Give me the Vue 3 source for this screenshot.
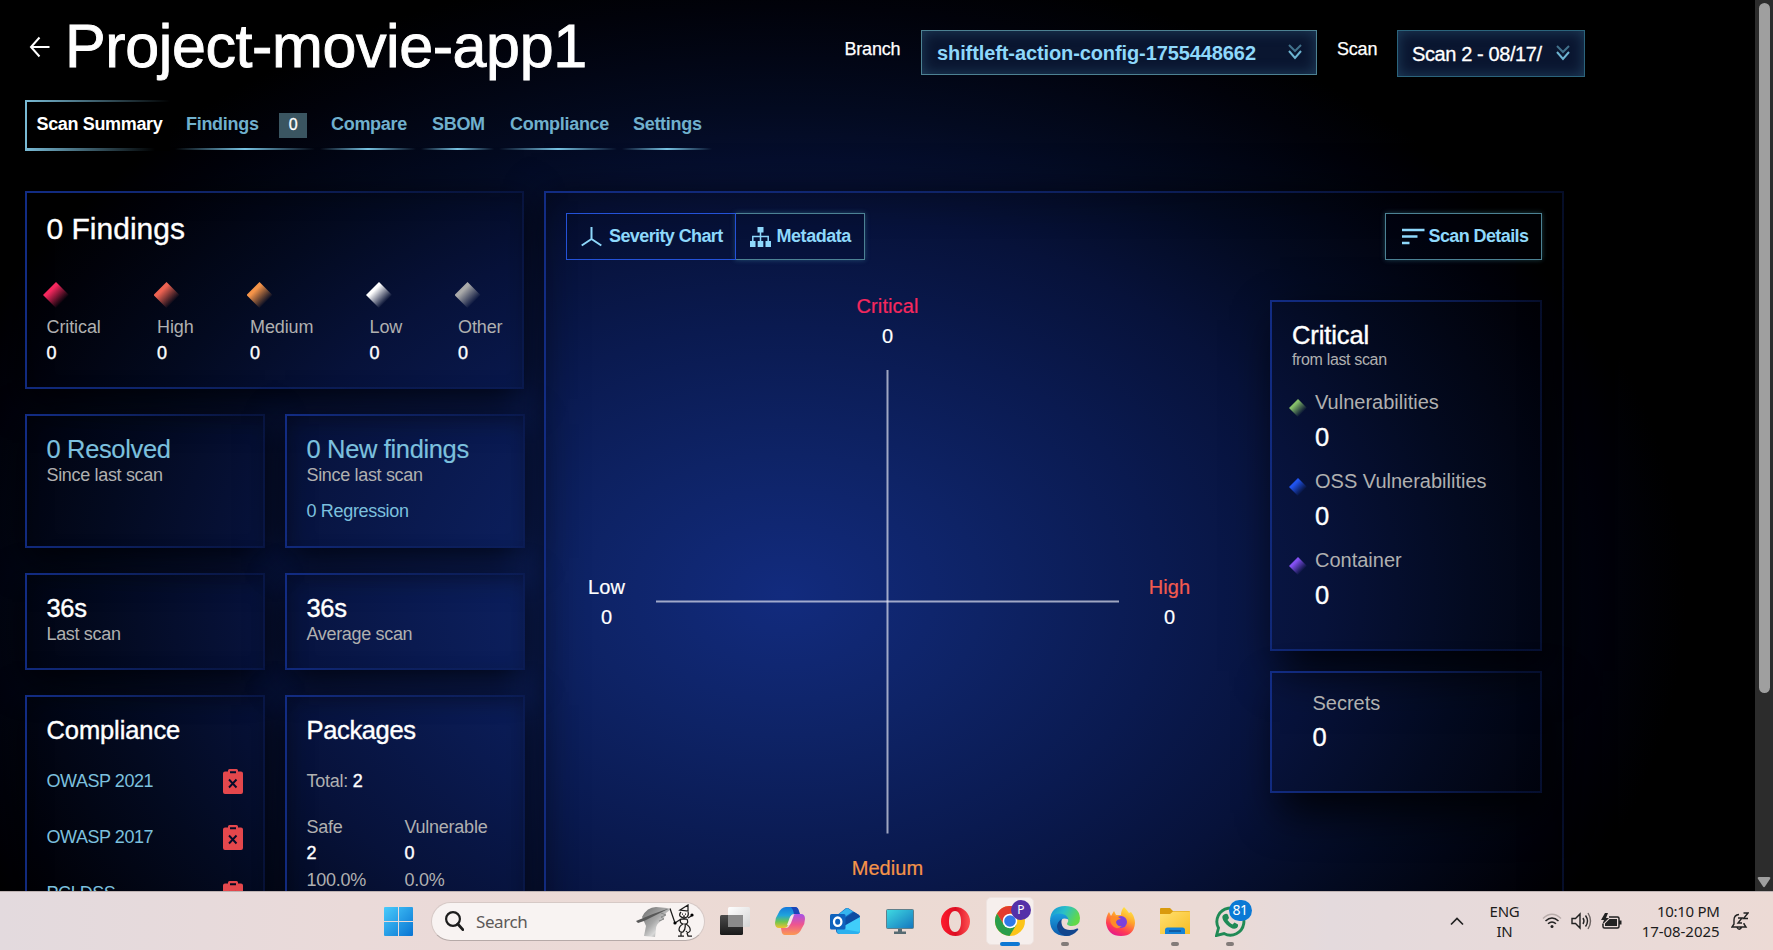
<script setup>
const tabs = [
  { label: 'Findings', width: 140, badge: '0' },
  { label: 'Compare', width: 96 },
  { label: 'SBOM', width: 73 },
  { label: 'Compliance', width: 118 },
  { label: 'Settings', width: 90 },
]
const severities = [
  { name: 'Critical', tone: 'critical' },
  { name: 'High', tone: 'high' },
  { name: 'Medium', tone: 'medium' },
  { name: 'Low', tone: 'low' },
  { name: 'Other', tone: 'other' },
]
const standards = ['OWASP 2021', 'OWASP 2017', 'PCI DSS']
const kinds = [
  { name: 'Vulnerabilities', tone: 'green' },
  { name: 'OSS Vulnerabilities', tone: 'blue' },
  { name: 'Container', tone: 'purple' },
]
</script>

<template>
  <div class="screen">
    <div class="browser">
      <main class="page">
        <header class="top">
          <svg class="back" width="22" height="22" viewBox="0 0 22 22" fill="none" stroke="#fff" stroke-width="2"><path d="M20.500 11H2M10.500 1.500 2 11l8.500 9.500" /></svg>
          <h1>Project-movie-app1</h1>
          <div class="pickers">
            <span class="plabel">Branch</span>
            <div class="select branch">
              <span class="val">shiftleft-action-config-1755448662</span>
              <svg width="14" height="16" viewBox="0 0 14 16" fill="none" stroke-width="2"><path d="M1 1l6 6 6-6" stroke="#41728c" /><path d="M1 7l6 7 6-7" stroke="#6db4d2" /></svg>
            </div>
            <span class="plabel scanl">Scan</span>
            <div class="select scan">
              <span class="val">Scan 2 - 08/17/</span>
              <svg width="14" height="16" viewBox="0 0 14 16" fill="none" stroke-width="2"><path d="M1 1l6 6 6-6" stroke="#41728c" /><path d="M1 7l6 7 6-7" stroke="#6db4d2" /></svg>
            </div>
          </div>
        </header>

        <nav class="tabs">
          <div class="tab active">Scan Summary</div>
          <div v-for="t in tabs" :key="t.label" class="tab" :style="{ width: t.width + 'px' }">
            <span>{{ t.label }}</span><span v-if="t.badge" class="badge">{{ t.badge }}</span>
          </div>
        </nav>

        <div class="content">
          <div class="left">
            <section class="card findings">
              <h2>0 Findings</h2>
              <div class="sevs">
                <div v-for="s in severities" :key="s.name">
                  <i class="gem" :class="s.tone"></i>
                  <p class="muted">{{ s.name }}</p>
                  <p class="num">0</p>
                </div>
              </div>
            </section>
            <section class="card">
              <h3 class="sky">0 Resolved</h3>
              <p class="muted sub">Since last scan</p>
            </section>
            <section class="card">
              <h3 class="sky">0 New findings</h3>
              <p class="muted sub">Since last scan</p>
              <p class="regress">0 Regression</p>
            </section>
            <section class="card">
              <h3>36s</h3>
              <p class="muted sub">Last scan</p>
            </section>
            <section class="card">
              <h3>36s</h3>
              <p class="muted sub">Average scan</p>
            </section>
            <section class="card tall">
              <h3 class="wide">Compliance</h3>
              <div v-for="n in standards" :key="n" class="std">
                <span>{{ n }}</span>
                <svg width="20" height="25" viewBox="0 0 20 25"><path fill="#e5484d" fill-rule="evenodd" d="M2 2.500h3V1.500Q5 0 6.500 0h7Q15 0 15 1.500v1h3q2 0 2 2V23q0 2-2 2H2q-2 0-2-2V4.500q0-2 2-2ZM7 2.300v2h6v-2Z" /><path d="m6 10.500 7.500 8m0-8-7.500 8" stroke="#060d2b" stroke-width="1.900" /></svg>
              </div>
            </section>
            <section class="card tall">
              <h3>Packages</h3>
              <p class="muted total">Total: <b>2</b></p>
              <div class="pkg">
                <div><p class="muted">Safe</p><p class="num">2</p><p class="muted pct">100.0%</p></div>
                <div><p class="muted">Vulnerable</p><p class="num">0</p><p class="muted pct">0.0%</p></div>
              </div>
            </section>
          </div>

          <section class="card panel">
            <div class="toolbar">
              <button class="btn on">
                <svg width="21" height="24" viewBox="0 0 21 24" fill="none" stroke="#8ed8fb" stroke-width="2"><path d="M10.500 2v12.500M10.500 14 .700 20.500M10.500 14l9.800 6.500" /></svg>
                <span>Severity Chart</span>
              </button>
              <button class="btn meta">
                <svg width="21" height="20" viewBox="0 0 21 20" fill="#8ed8fb"><path d="M7.500 0h6v5.500h-6zM0 14h5.500v6H0zM7.700 14h5.600v6H7.700zM15.500 14H21v6h-5.500z" /><path d="M10.500 5v9M2.800 14V9.500h15.400V14" fill="none" stroke="#8ed8fb" stroke-width="1.500" /></svg>
                <span>Metadata</span>
              </button>
              <button class="btn details">
                <svg width="23" height="17" viewBox="0 0 23 17" stroke="#8ed8fb" stroke-width="2.400"><path d="M0 2h22.500M0 8.500h15.500M0 15h7.500" /></svg>
                <span>Scan Details</span>
              </button>
            </div>
            <div class="body">
              <div class="chart">
                <div class="lab ct"><span class="c-critical">Critical</span><span>0</span></div>
                <div class="lab cl"><span>Low</span><span>0</span></div>
                <svg class="cross" width="464" height="464" viewBox="0 0 464 464" stroke="#e6e8f5" stroke-opacity=".68" stroke-width="2"><path d="M231.500 0V463.500" /><path d="M0 231.500H463" /></svg>
                <div class="lab cr"><span class="c-high">High</span><span>0</span></div>
                <div class="lab cb"><span class="c-medium">Medium</span></div>
              </div>
              <aside>
                <div class="card crit">
                  <h3>Critical</h3>
                  <p class="muted from">from last scan</p>
                  <div v-for="k in kinds" :key="k.name" class="kind">
                    <i class="gem small" :class="k.tone"></i>
                    <div><p class="muted big">{{ k.name }}</p><p class="bignum">0</p></div>
                  </div>
                </div>
                <div class="card secrets">
                  <p class="muted big">Secrets</p>
                  <p class="bignum">0</p>
                </div>
              </aside>
            </div>
          </section>
        </div>
      </main>
      <div class="scroll">
        <div class="thumb"></div>
        <svg width="14" height="11" viewBox="0 0 14 11"><path d="M2 0h10q2 0 1 2L8 9.500q-1 1.500-2 0L1 2Q0 0 2 0Z" fill="#9f9f9f" /></svg>
      </div>
    </div>

    <footer class="taskbar">
      <svg class="win" width="29" height="29" viewBox="0 0 29 29">
        <defs><linearGradient id="w" x1="0" y1="0" x2="1" y2="1" gradientUnits="objectBoundingBox"><stop stop-color="#48cbfb" /><stop offset="1" stop-color="#0873d2" /></linearGradient></defs>
        <path fill="url(#w)" d="M1 0h13v14H0V1Q0 0 1 0ZM15 0h13q1 0 1 1v13H15ZM0 15h14v14H1q-1 0-1-1ZM15 15h14v13q0 1-1 1H15Z" />
      </svg>
      <div class="search">
        <svg width="19" height="20" viewBox="0 0 19 20" fill="none" stroke="#1d1d1d" stroke-width="2.200"><circle cx="8" cy="8" r="6.900" /><path d="m12.800 13 5 5.600" stroke-width="2.800" stroke-linecap="round" /></svg>
        <span>Search</span>
        <svg class="art" width="58" height="34" viewBox="0 0 58 34">
          <defs><linearGradient id="h" x1="0" y1="0" x2="1" y2="1"><stop stop-color="#6d6d6d" /><stop offset=".45" stop-color="#a8a8a8" /><stop offset=".65" stop-color="#d8d8d8" /><stop offset="1" stop-color="#555" /></linearGradient></defs>
          <path d="M6 13Q11 3 20 3l11 1 3 2-4 3q-1 5-5 8-5 3-5 8l-1 8-11-1 2-10Z" fill="url(#h)" />
          <path d="m0 17 17-7L34 4 24 9 8 17l-6 2Z" fill="#585858" /><path d="m25 9 5 2-5 2 3 2-5 2" fill="none" stroke="#888" />
          <g fill="none" stroke="#1b1b1b" stroke-width="1.250">
            <path d="M34 4.500 39 19M44 6l8-5v6ZM45 8q-2 2-1 4 3 3 7 1 2-2 1-5M46 10h1M49 10h1M47 12h2M39 19l6-4M52 14l5-3M45 15h6M45 15q-2 4 2 5-4 2-4 6 1 3 4 2 3-3 2-8 4 0 2-5M50 20q5 3 4 7-2 3-4 0M45 29v3h-3M51 29l1 3h4M44 32h4" />
          </g>
          <circle cx="39" cy="19" r="1.600" /><circle cx="56" cy="11" r="1.600" />
        </svg>
      </div>
      <div class="apps">
        <div class="slot">
          <svg width="30" height="29" viewBox="0 0 30 29"><defs><linearGradient id="t1" x1="0" y1="0" x2="0" y2="1"><stop stop-color="#4b4b4b" /><stop offset="1" stop-color="#191919" /></linearGradient><linearGradient id="t2" x1="0" y1="0" x2="1" y2="1"><stop stop-color="#fff" /><stop offset="1" stop-color="#d5d5d5" /></linearGradient></defs><rect y="8" width="23" height="20" rx="1.500" fill="url(#t1)" /><rect x="8" width="22" height="20" rx="1.500" fill="url(#t2)" /><path d="M8 8h15v12H8z" fill="#8b8b8b" /></svg>
        </div>
        <div class="slot">
          <svg width="30" height="28" viewBox="0 0 30 28">
            <defs>
              <linearGradient id="c1" x1="0" y1="0" x2="0" y2="1"><stop stop-color="#1478dc" /><stop offset=".4" stop-color="#20a4dc" /><stop offset=".7" stop-color="#6cc552" /><stop offset="1" stop-color="#f2c22e" /></linearGradient>
              <linearGradient id="c2" x1="0" y1="0" x2="0" y2="1"><stop stop-color="#a552e8" /><stop offset=".5" stop-color="#ee5590" /><stop offset="1" stop-color="#fb9a52" /></linearGradient>
            </defs>
            <path d="M11 0h9q3 0 3.500 4l.5 3h-5q-3 0-4 4l-2 7q-1 3-4 3H4q-4 0-4-5Q0 11 3 7q3-7 8-7Z" fill="url(#c1)" />
            <path d="M16 0h4q3 0 4 4l1 3h-6q-1-5-3-7Z" fill="#1b45b8" />
            <path d="M19 28h-9q-3 0-3.500-4L6 21h5q3 0 4-4l2-7q1-3 4-3h5q4 0 4 5 0 5-3 9-3 7-8 7Z" fill="url(#c2)" />
            <path d="m12 18 3-8q1-2 4-2l-3 8q-1 3-4 2Z" fill="#f6e6e6" />
          </svg>
        </div>
        <div class="slot">
          <svg width="30" height="26" viewBox="0 0 30 26">
            <path d="M6 8 16 0q1-.5 2 0l11 7q1 1 1 2v13q0 4-4 4H10q-4 0-4-4Z" fill="#1268bd" /><path d="m9 6 8-6 6 3.500-12 8Z" fill="#35b4ee" /><path d="M30 9 13 19 9 14 24 4l5 3Z" fill="#0c4ca3" /><path d="m14 18 16-9v13q0 4-4 4H13Z" fill="#40cdfa" /><path d="M7 20l23 4q-1 2-4 2H10q-3 0-3-3Z" fill="#2bb0ee" /><rect y="6" width="15.500" height="15.500" rx="1.500" fill="#0f62bd" /><ellipse cx="7.700" cy="13.700" rx="3.700" ry="4.200" fill="none" stroke="#fff" stroke-width="2.300" />
          </svg>
        </div>
        <div class="slot">
          <svg width="28" height="25" viewBox="0 0 28 25"><defs><linearGradient id="m" x1="0" y1="0" x2="1" y2="1"><stop stop-color="#3fdbe2" /><stop offset="1" stop-color="#1475be" /></linearGradient></defs><rect x=".5" y=".5" width="27" height="19" rx="1" fill="url(#m)" stroke="#5f7f8b" /><path d="M12 20h4v2.500h4V25H8v-2.500h4Z" fill="#566a72" /></svg>
        </div>
        <div class="slot">
          <svg width="29" height="29" viewBox="0 0 29 29"><defs><linearGradient id="o" x1="0" y1="0" x2="1" y2="0"><stop stop-color="#ff1b2d" /><stop offset=".5" stop-color="#dc0d22" /><stop offset="1" stop-color="#ff5252" /></linearGradient></defs><path fill="url(#o)" fill-rule="evenodd" d="M14.500 0a14.500 14.500 0 1 0 0 29 14.500 14.500 0 1 0 0-29ZM14 4c4 0 6 4.500 6 10.500S18 25 14 25 8 20.500 8 14.500 10 4 14 4Z" /></svg>
        </div>
        <div class="slot">
          <div class="tile">
            <svg width="30" height="30" viewBox="0 0 30 30"><circle cx="15" cy="15" r="15" fill="#fcc419" /><path d="M2 7.500A15 15 0 0 1 28 7.500H15L9 19Z" fill="#e23b2e" /><path d="M2 7.500A15 15 0 0 0 14.500 30L21.500 18.500 9 19Z" fill="#2a9d4b" /><circle cx="15" cy="15" r="7.300" fill="#fff" /><circle cx="15" cy="15" r="5.800" fill="#3079e8" /></svg>
            <span class="pbadge">P</span>
          </div>
          <i class="bar"></i>
        </div>
        <div class="slot">
          <svg width="30" height="30" viewBox="0 0 30 30"><defs><linearGradient id="e1" x1="0" y1="0" x2="1" y2=".4"><stop stop-color="#1591d8" /><stop offset=".5" stop-color="#2abfc8" /><stop offset="1" stop-color="#62d948" /></linearGradient><linearGradient id="e2" x1="0" y1="0" x2="0" y2="1"><stop stop-color="#1ba0df" /><stop offset="1" stop-color="#0c59ab" /></linearGradient></defs><path d="M0 14Q1 0 15 0t15 12q0 8-8 8-4 0-5-2 2-3 1-5-2-4-8-4-7 0-10 5Z" fill="url(#e1)" /><path d="M0 14q2-6.500 9-6.500 8 0 9.500 6-8-3-7.500 4Q11 26 21 29q-3 1-6 1Q0 29 0 14Z" fill="url(#e2)" /><path d="M11.500 13q-1 11 8.500 11 4 0 7-1.500 2-.5 1 1.500-5 6-12 6-8-2-9-9 0-5 4.500-8Z" fill="#12468e" /></svg>
          <i class="dot"></i>
        </div>
        <div class="slot">
          <svg width="29" height="29" viewBox="0 0 29 29"><defs><linearGradient id="f" x1=".8" y1="0" x2=".3" y2="1"><stop stop-color="#fff04a" /><stop offset=".4" stop-color="#ffa42b" /><stop offset=".75" stop-color="#ff3b53" /><stop offset="1" stop-color="#e4168e" /></linearGradient></defs><path d="M3 5l2 4 3-5 2 4 5 0q0-5 3-8 3 3 5 6l2-1q4 5 4 11-1 13-14 13T0 16Q0 9 3 5Z" fill="url(#f)" /><circle cx="15" cy="15" r="6" fill="#7c41db" /><path d="M5 10q6-2 10 2-4 0-5 3 1 5 6 4-6 5-10-1-3-4-1-8Z" fill="#ff8a28" /></svg>
        </div>
        <div class="slot">
          <svg width="30" height="27" viewBox="0 0 30 27"><defs><linearGradient id="d" x1="0" y1="0" x2="1" y2="1"><stop stop-color="#ffe070" /><stop offset="1" stop-color="#f8bd23" /></linearGradient></defs><path d="M0 1q0-1 1-1h9l3 3h16q1 0 1 1v5H0Z" fill="#d99a0c" /><path d="M0 6h10l3-2.500h17V26H0Z" fill="url(#d)" /><path d="M5 26v-4q0-2.500 2.500-2.500h15q2.500 0 2.500 2.500v4Z" fill="#1583d7" /><path d="M9 23h12" stroke="#0d4f94" stroke-width="1.500" /></svg>
          <i class="dot"></i>
        </div>
        <div class="slot">
          <div class="wa">
            <svg width="31" height="31" viewBox="0 0 31 31"><path d="M1.500 29.500 3.500 22A13.500 13.500 0 1 1 9 27.500Z" fill="none" stroke="#1f8a55" stroke-width="2.900" /><path d="M10 8q2-1 3 1l1 3-1.500 2q2 3 5 4.500l2-2 3.500 2q.5 3-2.500 4-4 1-9-4-5-5-4-8.500 1-1.500 2.500-2Z" fill="#1f8a55" /></svg>
            <span class="wbadge">81</span>
          </div>
          <i class="dot"></i>
        </div>
      </div>
      <div class="tray">
        <svg width="14" height="9" viewBox="0 0 14 9" fill="none" stroke="#222" stroke-width="1.700"><path d="m1 7.500 6-6 6 6" /></svg>
        <div class="lang"><span>ENG</span><span>IN</span></div>
        <svg class="wifi" width="20" height="16" viewBox="0 0 20 16" fill="none" stroke="#222" stroke-width="1.500"><path d="M1 5.500Q10-3 19 5.500" stroke="#b9adab" /><path d="M3.500 8q6.500-6 13 0M6 10.800q4-3.600 8 0" /><circle cx="10" cy="13.500" r="1.500" fill="#222" stroke="none" /></svg>
        <svg class="vol" width="21" height="18" viewBox="0 0 21 18" fill="none" stroke="#222" stroke-width="1.400"><path d="M1 6.500h3.500L9 2v14l-4.500-4.500H1ZM12 6q2 3 0 6M14.500 3.500q4 5.500 0 11" /><path d="M17 1q5 8 0 16" stroke="#6d6462" /></svg>
        <svg class="bat" width="21" height="17" viewBox="0 0 21 17"><path d="M8 4h8.500Q18 4 18 5.500v8q0 1.500-1.500 1.500H3.500Q2 15 2 13.500V11" fill="none" stroke="#222" stroke-width="1.500" /><path d="M8.500 6H16v7H4v-2.500ZM18 7.500h2.500v4H18ZM4 0 0 7h3l-2 5 7-7H5l2-5Z" fill="#222" /></svg>
        <div class="clock"><span>10:10 PM</span><span class="date">17-08-2025</span></div>
        <svg class="bell" width="18" height="19" viewBox="0 0 18 19" fill="none" stroke="#222" stroke-width="1.400"><path d="M8 2.500Q3 3 3 8v4l-2 3h14l-2-3v-1M6 15.500q2 3.500 4.500 0M7 6h4l-4 5h4M12.500 1H17l-4.500 5.500H17" /></svg>
      </div>
    </footer>
  </div>
</template>

<style>
html, body { margin: 0; background: #000; overflow: hidden; }
</style>

<style scoped>
.screen { width: 1773px; height: 950px; display: flex; flex-direction: column; overflow: hidden; font-family: "Liberation Sans", Arial, sans-serif; color: #fff; }
.screen * { box-sizing: border-box; }
h1, h2, h3, p { margin: 0; font-weight: 400; }
.browser { height: 891px; flex: none; display: flex; background: #000; overflow: hidden; }
.page { width: 1755px; height: 891px; overflow: hidden; background: radial-gradient(ellipse 900px 640px at 785px 595px, #122b7e 0, #0e2366 22%, #0a1a50 42%, #07123a 60%, #030a20 76%, #01020a 92%, #000 100%); }
.scroll { width: 18px; background: #2c2c2c; display: flex; flex-direction: column; justify-content: space-between; align-items: center; padding: 3px 0 14px; height: 891px; }
.scroll svg { transform: translateY(11px); }
.thumb { width: 11px; height: 690px; border-radius: 6px; background: #9f9f9f; }

.top { height: 100px; display: flex; align-items: flex-start; padding-left: 29px; }
.back { margin-top: 36px; }
h1 { font-size: 61px; line-height: 93px; letter-spacing: -.4px; margin-left: 14px; width: 560px; -webkit-text-stroke: .9px #fff; }
.pickers { display: flex; margin-left: 219.500px; padding-top: 30px; }
.plabel { font-size: 18px; line-height: 38px; letter-spacing: -.2px; width: 76.500px; -webkit-text-stroke: .25px #fff; }
.scanl { margin-left: 20px; width: 60px; }
.select { display: flex; align-items: center; justify-content: space-between; border: 1.500px solid #4d8293; background: #0a1630; box-shadow: inset 0 0 14px #203f5c; padding: 2px 14px 0 15px; }
.select .val { font-size: 20px; white-space: nowrap; }
.select svg { margin-top: -3px; }
.branch { width: 396px; height: 45px; }
.branch .val { color: #8ed8fb; font-weight: 700; letter-spacing: -.1px; }
.scan { width: 188px; height: 47px; border-color: #2b647c; padding-left: 14px; }
.scan .val { letter-spacing: -.4px; -webkit-text-stroke: .3px #fff; }

.tabs { display: flex; gap: 5px; height: 51px; margin-left: 25px; }
.tab { height: 50px; line-height: 49px; padding-left: 11px; font-size: 18px; font-weight: 700; letter-spacing: -.3px; color: #70b0cd; display: flex; align-items: flex-start; white-space: nowrap; background: linear-gradient(90deg, transparent, #79c4e4 50%, transparent) 0 48px / 100% 2px no-repeat; }
.tab.active { width: 145px; height: 51px; color: #fff; border-left: 2px solid #78b9d3; padding-left: 9.500px; letter-spacing: -.35px; background: linear-gradient(90deg, #78b9d3, transparent) 0 0 / 100% 2px no-repeat, linear-gradient(90deg, #78b9d3, transparent 90%) 0 100% / 100% 3px no-repeat, #000; }
.badge { width: 28px; height: 25px; line-height: 24px; margin: 13px 0 0 auto; margin-right: 8px; background: #3a5561; color: #fff; font-size: 16px; text-align: center; font-weight: 400; -webkit-text-stroke: .3px #fff; }

.content { display: flex; gap: 19px; margin: 40px 0 0 25px; align-items: flex-start; }
.card { border: 2px solid; border-image: linear-gradient(98deg, #122c84 0, #0f2468 35%, rgba(14, 34, 100, .4) 85%) 1; padding: 20px 19px 0 19.500px; box-shadow: 0 10px 36px rgba(0, 0, 0, .8), inset 8px 8px 24px -6px rgba(0, 0, 0, .25); }
.left { width: 500px; display: grid; grid-template-columns: 240px 240px; grid-template-rows: 198px 134px 97px 360px; gap: 25px 20px; }
.findings { grid-column: 1 / 3; padding-top: 16px; width: 499px; }
h2 { font-size: 30px; line-height: 40px; -webkit-text-stroke: .35px #fff; }
h3 { font-size: 25.500px; line-height: 27px; letter-spacing: -.35px; -webkit-text-stroke: .4px currentColor; }
h3.wide { letter-spacing: -.1px; }
.sky { color: #7cc0de; -webkit-text-stroke-width: .15px; }
.muted { color: #b0b0b0; font-size: 18px; line-height: 26px; letter-spacing: -.25px; white-space: nowrap; }
.num { font-size: 18px; line-height: 26px; -webkit-text-stroke: .4px #fff; }
.sevs { margin-top: 33px; display: grid; grid-template-columns: 110.500px 93px 119.500px 88.500px auto; }
.sevs .muted { letter-spacing: -.1px; }
.gem { display: block; width: 26px; height: 26px; margin: 0 0 6px -3.500px; clip-path: polygon(50% 0, 100% 50%, 50% 100%, 0 50%); background: linear-gradient(135deg, var(--c) 32%, transparent 76%); }
.critical { --c: #f5285e; } .high { --c: #ee6352; } .medium { --c: #f59449; } .low { --c: #fff; } .other { --c: #aaa; }
.green { --c: #84bd69; } .blue { --c: #2054f0; } .purple { --c: #8450f2; }
.sub { letter-spacing: -.33px; margin-top: -1px; }
.regress { margin-top: 10px; font-size: 18px; line-height: 26px; letter-spacing: -.33px; color: #7cc0de; }
.tall { padding-top: 20px; }
.std { height: 56px; display: flex; align-items: center; justify-content: space-between; color: #7cc0de; font-size: 18px; letter-spacing: -.45px; padding-right: 1px; }
h3 + .std { margin-top: 9.500px; }
.total { margin-top: 24px; }
.total b { font-weight: 400; color: #fff; -webkit-text-stroke: .4px #fff; }
.pkg { display: grid; grid-template-columns: 98px auto; margin-top: 20px; }
.pct { margin-top: 1px; }

.panel { width: 1020px; height: 760px; padding: 20px 20px 0; box-shadow: 0 6px 36px rgba(0, 0, 0, .75), inset 0 0 44px rgba(0, 0, 0, .3); }
.toolbar { display: flex; height: 47px; }
.btn { display: flex; align-items: center; border: 1.500px solid #4c8294; background: rgba(2, 6, 24, .15); box-shadow: 0 0 5px rgba(90, 180, 200, .35); color: #8ed8fb; font: 700 18px/45px "Liberation Sans", Arial, sans-serif; letter-spacing: -.45px; white-space: nowrap; padding: 0 0 0 14px; }
.on { width: 170px; border-color: #2452d8; box-shadow: none; position: relative; letter-spacing: -.6px; }
.on span { margin-left: 7px; }
.meta { width: 130px; margin-left: -1px; }
.meta span { margin-left: 5.500px; }
.details { margin-left: auto; width: 157px; padding-left: 15.500px; letter-spacing: -.6px; }
.details span { margin-left: 4px; }
.body { display: flex; justify-content: space-between; }
.chart { margin: 31px 0 0 -10px; display: grid; grid-template-columns: 100px 464px 99px; grid-template-rows: 79px 464px 80px; justify-items: center; }
.lab { display: flex; flex-direction: column; align-items: center; font-size: 20px; line-height: 30px; letter-spacing: .1px; -webkit-text-stroke: .2px currentColor; }
.ct, .cb { grid-column: 1 / 4; }
.cl, .cr { align-self: center; }
.cl { padding-left: 1px; }
.cb { padding-top: 19px; }
.c-critical { color: #f5285e; } .c-high { color: #f35b4e; } .c-medium { color: #f59449; }
aside { margin-top: 40px; width: 272px; display: flex; flex-direction: column; gap: 20px; }
.crit { height: 351px; padding-top: 19px; }
.crit, .secrets { padding-left: 20px; box-shadow: 10px 20px 42px rgba(0, 0, 0, .8); }
.from { font-size: 16px; line-height: 22px; letter-spacing: -.35px; }
.crit h3 { margin-top: .5px; letter-spacing: -.1px; }
.kind { display: flex; height: 79px; }
.from + .kind { margin-top: 19.500px; }
.gem.small { width: 18px; height: 18px; margin: 9px 8px 0 -3px; flex: none; }
.big { font-size: 20px; line-height: 24px; letter-spacing: 0; }
.bignum { font-size: 25.500px; line-height: 30px; margin-top: 8px; -webkit-text-stroke: .35px #fff; }
.secrets { height: 122px; padding: 18px 0 0 40.500px; }
.secrets .bignum { margin-top: 7px; }

.taskbar { height: 59px; flex: none; display: flex; align-items: center; padding-left: 384px; border-top: 1px solid #bdb2b2; background: linear-gradient(90deg, #e3dade 0, #eadad9 20%, #ecdad3 48%, #ebdad5 68%, #e4dadd 75%, #ecdad5 100%); font-family: "Noto Sans", "Open Sans", sans-serif; color: #1c1c1c; }
.search { margin-left: 17.500px; width: 274px; height: 39px; border-radius: 20px; background: #f8f3f2; border: 1px solid #d6c9c6; border-bottom-color: #b6aaa8; display: flex; align-items: center; padding-left: 13px; }
.search span { font-size: 17px; letter-spacing: -.4px; margin-left: 12.500px; color: #5c5958; }
.art { margin-left: auto; margin-right: 10px; }
.apps { display: flex; margin-left: 3px; }
.slot { width: 55px; height: 58px; display: flex; align-items: center; justify-content: center; position: relative; }
.tile { width: 48px; height: 48px; border-radius: 5px; background: #f6efed; border: 1px solid #eee3e0; display: flex; align-items: center; justify-content: center; position: relative; }
.wa { position: relative; display: flex; }
.pbadge, .wbadge { position: absolute; color: #fff; text-align: center; }
.pbadge { right: 2px; top: 2px; width: 20px; height: 20px; border-radius: 50%; background: #5430a8; font-size: 12px; line-height: 20px; }
.wbadge { right: -6px; top: -6px; width: 23px; height: 21px; border-radius: 11px; background: #0b79d5; font-size: 14px; line-height: 20px; letter-spacing: -.6px; }
.bar, .dot { position: absolute; bottom: 4.500px; height: 4px; border-radius: 2px; }
.bar { width: 20px; background: #0c77d3; }
.dot { width: 8px; background: #827b79; }
.tray { margin-left: 192.500px; display: flex; align-items: center; font-size: 15px; line-height: 20px; letter-spacing: -.3px; }
.lang, .clock { display: flex; flex-direction: column; }
.lang { width: 50px; margin-left: 15.500px; align-items: center; }
.wifi { margin-left: 12.500px; }
.vol { margin-left: 9px; }
.bat { margin-left: 9px; }
.clock { width: 90px; margin-left: 7.500px; align-items: flex-end; }
.date { letter-spacing: -.05px; }
.bell { margin-left: 11px; }
</style>
